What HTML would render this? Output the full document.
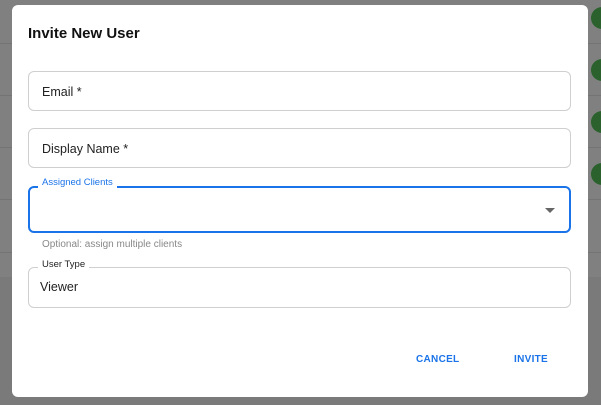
<!DOCTYPE html>
<html><head><style>
*{box-sizing:border-box;margin:0;padding:0}
body{width:601px;height:405px;overflow:hidden;background:#7a7a7a;font-family:"Liberation Sans",sans-serif;position:relative}
.bg{position:absolute;left:0;top:0;width:601px;height:277px;background:#808080}
.ln{position:absolute;left:0;width:601px;height:1px;background:#747474}
.dot{position:absolute;left:591px;width:22px;height:22px;border-radius:50%;background:#2a612c}
.dlg{position:absolute;left:12px;top:5px;width:576px;height:392px;background:#fff;border-radius:6px}
.t{position:absolute;left:16px;top:20px;font-size:15px;font-weight:bold;color:#111}
.f{position:absolute;left:16px;width:543px;border:1px solid #cfcfcf;border-radius:6px;height:40px}
.f span{position:absolute;left:13px;top:13px;font-size:12.5px;color:#222}
.lab{position:absolute;background:#fff;padding:0 4px;font-size:9.5px}
.btn{position:absolute;top:349px;font-size:10px;font-weight:bold;color:#1a73e8;letter-spacing:.3px}
</style></head><body>
<div class="bg"></div>
<div class="ln" style="top:43px"></div><div class="ln" style="top:95px"></div><div class="ln" style="top:147px"></div><div class="ln" style="top:199px"></div><div class="ln" style="top:252px"></div>
<div class="dot" style="top:7px"></div><div class="dot" style="top:59px"></div><div class="dot" style="top:111px"></div><div class="dot" style="top:163px"></div>
<div class="dlg">
<div class="t">Invite New User</div>
<div class="f" style="top:66px"><span>Email *</span></div>
<div class="f" style="top:123px"><span>Display Name *</span></div>
<div class="f" style="top:181px;height:47px;border:2px solid #1a73e8"></div>
<div class="lab" style="left:26px;top:172px;color:#1a73e8">Assigned Clients</div>
<div style="position:absolute;left:533px;top:203px;width:0;height:0;border-left:5px solid transparent;border-right:5px solid transparent;border-top:5px solid #666"></div>
<div style="position:absolute;left:30px;top:234px;font-size:10px;color:#888">Optional: assign multiple clients</div>
<div class="f" style="top:262px;height:41px"><span style="left:11px;top:12px">Viewer</span></div>
<div class="lab" style="left:26px;top:254px;color:#222">User Type</div>
<div class="btn" style="left:404px">CANCEL</div>
<div class="btn" style="left:502px">INVITE</div>
</div>
</body></html>
